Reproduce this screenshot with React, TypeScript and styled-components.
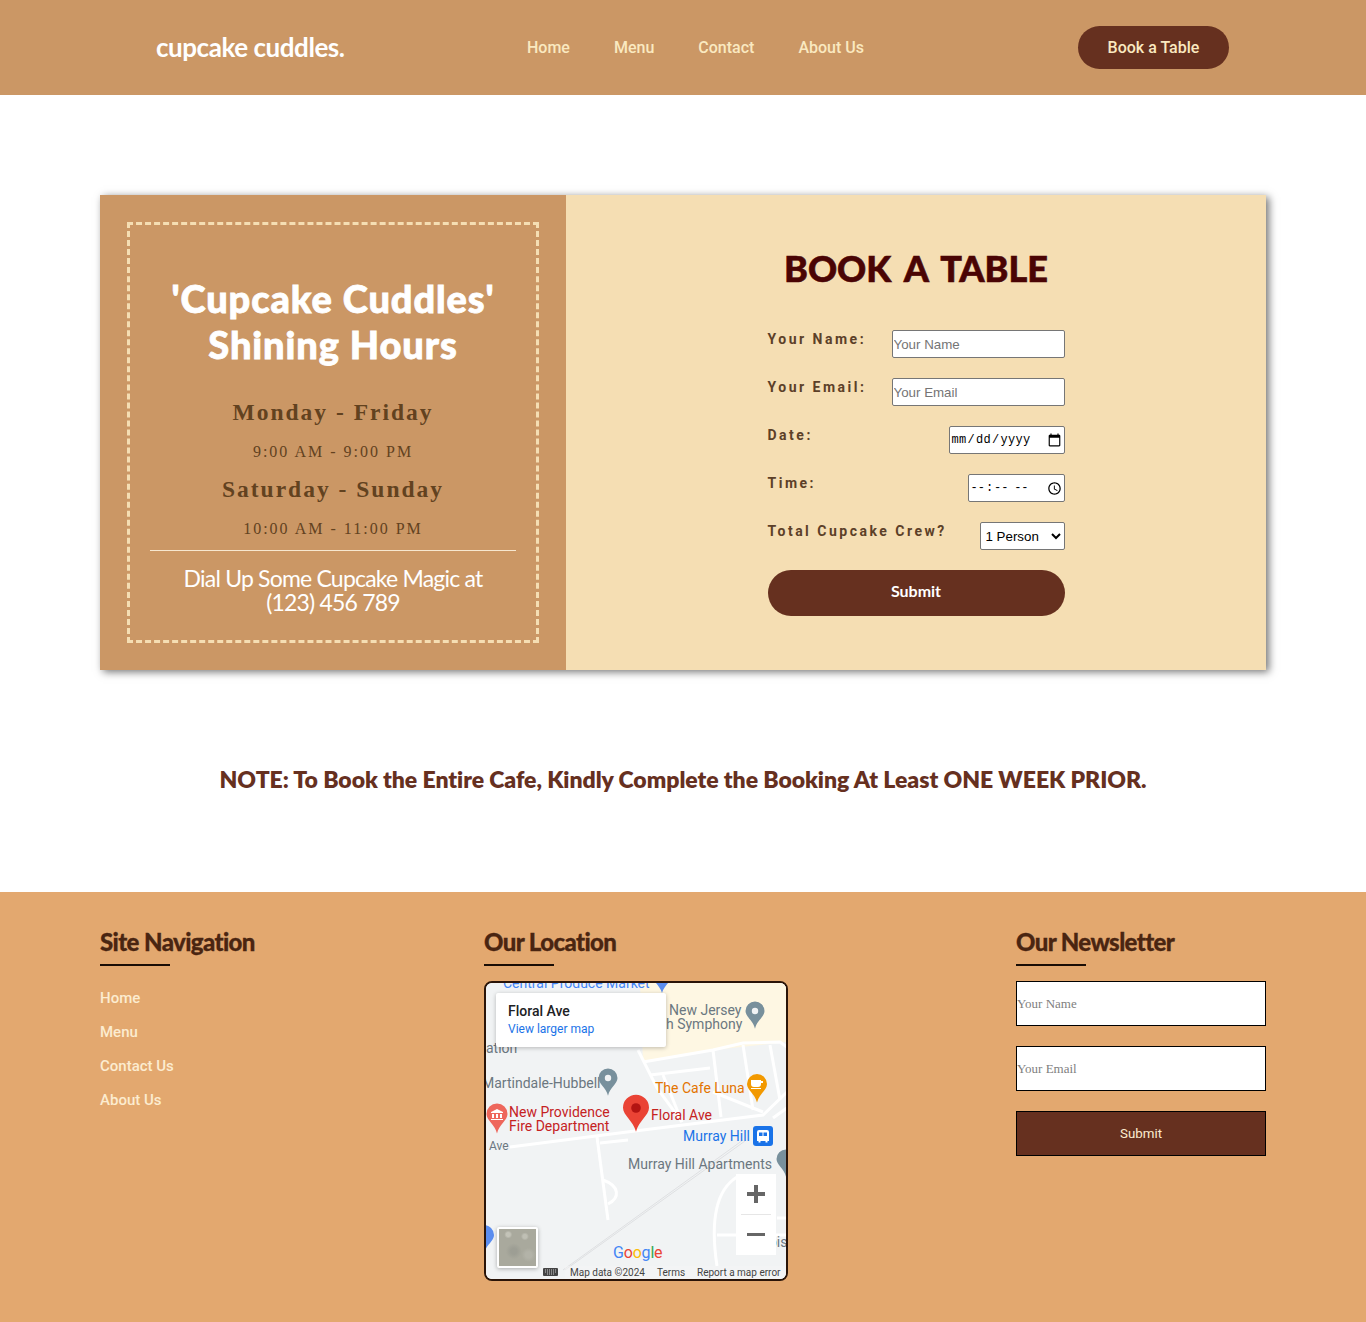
import React from 'react'
import styled, { createGlobalStyle } from 'styled-components'

const GlobalStyle = createGlobalStyle`
    * { box-sizing: border-box; }
    html, body { margin: 0; padding: 0; background: #fff; }
    body { font-family: 'Roboto', 'Liberation Sans', sans-serif; }
`

const SPARTAN = `'Lato', 'Open Sans', sans-serif`
const SERIF = `'Liberation Serif', serif`

const Header = styled.header`
    display: flex;
    align-items: center;
    height: 95px;
    padding: 0 137px 0 156px;
    background: #cb9765;
`

const Logo = styled.div`
    width: 188px;
    margin-top: -2px;
    font-family: ${SPARTAN};
    font-size: 26px;
    font-weight: 700;
    letter-spacing: -0.45px;
    color: #fff;
    white-space: nowrap;
`

const Nav = styled.nav`
    display: flex;
    gap: 44px;
    margin-left: 183px;
    margin-top: -1px;
`

const NavLink = styled.a`
    font-size: 16px;
    font-weight: 500;
    color: #fae9c0;
`

const HeaderButton = styled.button`
    width: 151px;
    height: 43px;
    margin-left: auto;
    margin-top: -1px;
    border: 0;
    border-radius: 22px;
    background: #66301f;
    color: #fae9c0;
    font-family: inherit;
    font-size: 16px;
    font-weight: 500;
`

const Main = styled.main`
    padding: 100px 100px 0;
`

const Card = styled.section`
    display: flex;
    height: 475px;
    box-shadow: 3px 2px 8px rgba(0, 0, 0, 0.55);
`

const HoursPanel = styled.div`
    width: 466px;
    padding: 27px;
    background: #cb9765;
`

const HoursFrame = styled.div`
    height: 421px;
    padding: 50px 20px 0;
    border: 3px dashed #f5deb3;
    text-align: center;
`

const HoursTitle = styled.h2`
    margin: 0;
    font-family: ${SPARTAN};
    font-size: 38px;
    font-weight: 900;
    line-height: 46px;
    letter-spacing: 0.9px;
    color: #fff;
    -webkit-text-stroke: 0.8px #fff;
`

const DayName = styled.h3`
    margin: 0;
    font-family: ${SERIF};
    font-size: 23.5px;
    font-weight: 700;
    line-height: 30px;
    letter-spacing: 2px;
    color: #62421f;

    &:first-of-type { margin-top: 30px; }
`

const DayHours = styled.p`
    margin: 15px 0 12px;
    font-family: ${SERIF};
    font-size: 16px;
    line-height: 20px;
    letter-spacing: 2px;
    color: #62421f;
`

const Rule = styled.hr`
    margin: -1px 0 0;
    border: 0;
    border-top: 1px solid #f7e7cf;
`

const Dial = styled.p`
    margin: 15px 0 0;
    font-family: ${SPARTAN};
    font-size: 23px;
    line-height: 24px;
    letter-spacing: -0.8px;
    color: #fff;
`

const BookingPanel = styled.div`
    display: flex;
    flex: 1;
    flex-direction: column;
    align-items: center;
    background: #f5deb3;
`

const BookingTitle = styled.h1`
    margin: 49px 0 38px;
    font-family: ${SPARTAN};
    font-size: 36px;
    font-weight: 900;
    line-height: 48px;
    word-spacing: 5px;
    color: #4a0404;
    -webkit-text-stroke: 0.6px #4a0404;
`

const BookingForm = styled.form`
    display: flex;
    flex-direction: column;
    gap: 20px;
    width: 297px;
`

const FormRow = styled.div`
    display: flex;
    justify-content: space-between;
    align-items: flex-start;
    height: 28px;
`

const FormLabel = styled.label`
    font-size: 14px;
    font-weight: 700;
    line-height: 18px;
    letter-spacing: 2.5px;
    color: #5c4028;
`

const FormField = styled.input<{ $width: number }>`
    width: ${p => p.$width}px;
    height: 28px;
    padding: 1px;
    border: 1px solid #767676;
    border-radius: 2px;
    background: #fff;
    font-family: 'Liberation Sans', sans-serif;
    font-size: 13.33px;

    &::placeholder { color: #757575; }
`

const TemporalField = styled(FormField)<{ $spacing: number }>`
    font-family: 'Liberation Mono', monospace;
    font-size: 12px;
    letter-spacing: ${p => p.$spacing}px;

    &::-webkit-calendar-picker-indicator {
        width: 15px;
        height: 15px;
        margin: 0 1px 0 0;
        padding: 0;
    }
`

const CrewSelect = styled.select`
    width: 85px;
    height: 28px;
    padding-left: 1px;
    border: 1px solid #767676;
    border-radius: 2px;
    background: #fff;
    font-family: 'Liberation Sans', sans-serif;
    font-size: 13.33px;
`

const BookingSubmit = styled.button`
    height: 46px;
    padding-bottom: 6px;
    border: 0;
    border-radius: 23px;
    background: #66301f;
    color: #fff;
    font-family: ${SPARTAN};
    font-size: 16px;
    font-weight: 700;
`

const Note = styled.p`
    margin: 0;
    padding: 95px 0 99px;
    font-family: ${SPARTAN};
    font-size: 23px;
    font-weight: 800;
    line-height: 28px;
    letter-spacing: -0.05px;
    text-align: center;
    color: #66301f;
`

const Footer = styled.footer`
    display: flex;
    height: 430px;
    padding: 36px 100px 0;
    background: #e3a86f;
`

const FooterColumn = styled.div<{ $width: number }>`
    width: ${p => p.$width}px;
    flex: none;
`

const FooterTitle = styled.h4`
    margin: 0 0 15px;
    font-family: ${SPARTAN};
    font-size: 24px;
    font-weight: 900;
    line-height: 28px;
    letter-spacing: -0.6px;
    color: #4a2511;
    -webkit-text-stroke: 0.3px #4a2511;

    &::after {
        content: '';
        display: block;
        width: 70px;
        height: 2px;
        margin-top: 8px;
        background: #1a0d05;
    }
`

const FooterLinks = styled.ul`
    display: flex;
    flex-direction: column;
    gap: 14px;
    margin: 22px 0 0;
    padding: 0;
    list-style: none;
`

const FooterLink = styled.li`
    font-size: 15px;
    font-weight: 500;
    line-height: 20px;
    color: #fcecd0;
`

const MapFrame = styled.div`
    position: relative;
    width: 304px;
    height: 300px;
    overflow: hidden;
    border: 2px solid #2a1408;
    border-radius: 8px;
    background: #f1f3f4;
`

const MapDrawing = styled.svg`
    display: block;
    width: 300px;
    height: 296px;
    font-family: 'Roboto', sans-serif;
`

const MapCard = styled.div`
    position: absolute;
    top: 10px;
    left: 10px;
    width: 170px;
    height: 54px;
    padding: 9px 12px;
    border-radius: 2px;
    background: #fff;
    box-shadow: 0 1px 4px rgba(0, 0, 0, 0.25);
`

const MapCardTitle = styled.div`
    font-size: 14px;
    font-weight: 500;
    line-height: 18px;
    color: #202124;
`

const MapCardLink = styled.div`
    margin-top: 1px;
    font-size: 12px;
    line-height: 16px;
    color: #1a73e8;
`

const ZoomControl = styled.div`
    position: absolute;
    top: 191px;
    left: 250px;
    display: flex;
    flex-direction: column;
    align-items: center;
    width: 40px;
    height: 81px;
    background: #fff;
`

const ZoomButton = styled.div`
    display: flex;
    flex: 1;
    align-items: center;
    justify-content: center;
    width: 100%;
    color: #666;
`

const ZoomDivider = styled.div`
    width: 30px;
    height: 1px;
    background: #e6e6e6;
`

const Thumb = styled.div`
    position: absolute;
    top: 244px;
    left: 11px;
    width: 41px;
    height: 41px;
    border: 2px solid #fff;
    border-radius: 2px;
    background:
        radial-gradient(circle at 25% 15%, #c3c3b8 0 2px, transparent 4px),
        radial-gradient(circle at 70% 20%, #bfbfb4 0 2px, transparent 4px),
        radial-gradient(circle at 40% 60%, #9d9e94 0 3px, transparent 8px),
        radial-gradient(circle at 80% 70%, #b3b3a8 0 3px, transparent 7px),
        #a9a99d;
    box-shadow: 0 1px 4px rgba(0, 0, 0, 0.3);
`

const NewsletterForm = styled.form`
    display: flex;
    flex-direction: column;
    gap: 20px;
`

const NewsletterInput = styled.input`
    width: 250px;
    height: 45px;
    padding: 0;
    border: 1.5px solid #000;
    background: #fff;
    font-family: ${SERIF};
    font-size: 13px;

    &::placeholder { color: #808080; }
`

const NewsletterSubmit = styled.button`
    width: 250px;
    height: 45px;
    border: 1.5px solid #000;
    background: #66301f;
    color: #fcecd0;
    font-family: inherit;
    font-size: 13.33px;
`

const Pin = ({ x, y, fill, r = 9 }: { x: number; y: number; fill: string; r?: number }) => (
    <g transform={`translate(${x} ${y})`}>
        <path d={`M0 ${r * 1.75}C${-r * 0.2} ${r * 0.9} ${-r} ${r * 0.5} ${-r} ${-r * 0.1}A${r} ${r} 0 1 1 ${r} ${-r * 0.1}C${r} ${r * 0.5} ${r * 0.2} ${r * 0.9} 0 ${r * 1.75}Z`} fill={fill} />
    </g>
)

const MapPicture = () => (
    <MapDrawing viewBox="486 983 300 296">
        <rect x="486" y="983" width="300" height="296" fill="#f1f3f4" />
        <path d="M640 983H786V1042L713 1050L643 1062Z" fill="#fef7e3" />
        <g fill="none" stroke="#fff" strokeWidth="3">
            <path d="M638 1050L657 1088L682 1122" />
            <path d="M643 1062L713 1050L743 1043L780 1042L787 1047" />
            <path d="M650 1075L710 1068" />
            <path d="M663 1075L682 1122" />
            <path d="M713 1050L721 1117" />
            <path d="M743 1045L753 1110" />
            <path d="M770 1045L780 1100" />
            <path d="M713 1092L763 1112" />
            <path d="M510 1147L627 1132L763 1115L787 1092" />
            <path d="M773 1118L787 1108" />
            <path d="M597 1137L608 1220" />
            <path d="M600 1143L628 1140" />
            <path d="M603 1180C620 1186 620 1198 608 1204" />
            <path d="M737 1177C716 1190 710 1220 717 1266" />
            <path d="M717 1235H786" />
            <path d="M777 1218H786" />
        </g>
        <path d="M563 1270L743 1140M565 1270L745 1141" fill="none" stroke="#d9dbdd" strokeWidth="0.8" />
        <text x="503" y="988" fontSize="14" fill="#4285f4">Central Produce Market</text>
        <Pin x={662} y={979} fill="#5b8def" r={8} />
        <g fontSize="14" fill="#6b7780">
            <text x="669" y="1015">New Jersey</text>
            <text x="666" y="1029">h Symphony</text>
            <text x="486" y="1053">ation</text>
            <text x="482" y="1088">Martindale-Hubbell</text>
            <text x="628" y="1169">Murray Hill Apartments</text>
            <text x="769" y="1247">bis</text>
        </g>
        <text x="489" y="1150" fontSize="12" fill="#6b7780">Ave</text>
        <Pin x={755} y={1012} fill="#78909c" r={9.5} />
        <circle cx="755" cy="1011" r="3.2" fill="#f1f3f4" />
        <Pin x={608} y={1079} fill="#78909c" r={9.5} />
        <circle cx="608" cy="1078" r="3.2" fill="#f1f3f4" />
        <Pin x={786} y={1160} fill="#78909c" r={9.5} />
        <text x="655" y="1093" fontSize="14" fill="#e37400">The Cafe Luna</text>
        <Pin x={757} y={1085} fill="#f29900" r={10} />
        <path d="M751 1080h10v4a3 3 0 0 1-3 3h-4a3 3 0 0 1-3-3zM751 1088h10v1h-10zM761 1081h2v2h-2z" fill="#fff" />
        <Pin x={497} y={1115} fill="#ee675c" r={10.5} />
        <path d="M491 1112l6-3 6 3v1h-12zM492 1114h2v4h-2zM496 1114h2v4h-2zM500 1114h2v4h-2zM491 1119h12v1h-12z" fill="#fff" />
        <g fontSize="14" fill="#c5221f">
            <text x="509" y="1117">New Providence</text>
            <text x="509" y="1131">Fire Department</text>
            <text x="651" y="1120">Floral Ave</text>
        </g>
        <Pin x={636} y={1109} fill="#ea4335" r={13} />
        <circle cx="636" cy="1108" r="4.8" fill="#b31412" />
        <text x="683" y="1141" fontSize="14" fill="#1a73e8">Murray Hill</text>
        <rect x="753" y="1126" width="20" height="20" rx="3" fill="#1a73e8" />
        <path d="M759 1130h8a2 2 0 0 1 2 2v9h-1.500v1.500h-2V1141h-5v1.500h-2V1141H757v-9a2 2 0 0 1 2-2zM759 1132.500v3.500h3.500v-3.500zM763.500 1132.500v3.500h3.500v-3.500z" fill="#fff" fillRule="evenodd" />
        <Pin x={484} y={1236} fill="#5b8def" r={10} />
        <text x="613" y="1258" fontSize="16" letterSpacing="-0.2">
            <tspan fill="#4285f4">G</tspan><tspan fill="#ea4335">o</tspan><tspan fill="#fbbc05">o</tspan><tspan fill="#4285f4">g</tspan><tspan fill="#34a853">l</tspan><tspan fill="#ea4335">e</tspan>
        </text>
        <rect x="565" y="1266" width="221" height="13" fill="#f5f5f5" opacity="0.5" />
        <rect x="543" y="1268" width="15" height="8" rx="1" fill="#444" />
        <path d="M545 1270h11M545 1272h11M547 1274h7" stroke="#f1f3f4" strokeWidth="0.8" strokeDasharray="1 1" />
        <g fontSize="10" fill="#444">
            <text x="570" y="1276">Map data ©2024</text>
            <text x="657" y="1276">Terms</text>
            <text x="697" y="1276">Report a map error</text>
        </g>
    </MapDrawing>
)

const App = () => {
    return (
        <>
            <GlobalStyle />
            <Header>
                <Logo>cupcake cuddles.</Logo>
                <Nav>
                    <NavLink>Home</NavLink>
                    <NavLink>Menu</NavLink>
                    <NavLink>Contact</NavLink>
                    <NavLink>About Us</NavLink>
                </Nav>
                <HeaderButton>Book a Table</HeaderButton>
            </Header>
            <Main>
                <Card>
                    <HoursPanel>
                        <HoursFrame>
                            <HoursTitle>'Cupcake Cuddles'<br />Shining Hours</HoursTitle>
                            <DayName>Monday - Friday</DayName>
                            <DayHours>9:00 AM - 9:00 PM</DayHours>
                            <DayName>Saturday - Sunday</DayName>
                            <DayHours>10:00 AM - 11:00 PM</DayHours>
                            <Rule />
                            <Dial>Dial Up Some Cupcake Magic at<br />(123) 456 789</Dial>
                        </HoursFrame>
                    </HoursPanel>
                    <BookingPanel>
                        <BookingTitle>BOOK A TABLE</BookingTitle>
                        <BookingForm>
                            <FormRow>
                                <FormLabel>Your Name:</FormLabel>
                                <FormField $width={173} placeholder="Your Name" />
                            </FormRow>
                            <FormRow>
                                <FormLabel>Your Email:</FormLabel>
                                <FormField $width={173} placeholder="Your Email" />
                            </FormRow>
                            <FormRow>
                                <FormLabel>Date:</FormLabel>
                                <TemporalField $width={116} $spacing={0.3} type="date" />
                            </FormRow>
                            <FormRow>
                                <FormLabel>Time:</FormLabel>
                                <TemporalField $width={97} $spacing={1.1} type="time" />
                            </FormRow>
                            <FormRow>
                                <FormLabel>Total Cupcake Crew?</FormLabel>
                                <CrewSelect defaultValue="1">
                                    <option value="1">1 Person</option>
                                </CrewSelect>
                            </FormRow>
                            <BookingSubmit type="button">Submit</BookingSubmit>
                        </BookingForm>
                    </BookingPanel>
                </Card>
                <Note>NOTE: To Book the Entire Cafe, Kindly Complete the Booking At Least ONE WEEK PRIOR.</Note>
            </Main>
            <Footer>
                <FooterColumn $width={384}>
                    <FooterTitle>Site Navigation</FooterTitle>
                    <FooterLinks>
                        <FooterLink>Home</FooterLink>
                        <FooterLink>Menu</FooterLink>
                        <FooterLink>Contact Us</FooterLink>
                        <FooterLink>About Us</FooterLink>
                    </FooterLinks>
                </FooterColumn>
                <FooterColumn $width={532}>
                    <FooterTitle>Our Location</FooterTitle>
                    <MapFrame>
                        <MapPicture />
                        <MapCard>
                            <MapCardTitle>Floral Ave</MapCardTitle>
                            <MapCardLink>View larger map</MapCardLink>
                        </MapCard>
                        <ZoomControl>
                            <ZoomButton>
                                <svg width="18" height="18" viewBox="0 0 18 18"><path d="M0 7h7V0h4v7h7v4h-7v7H7v-7H0z" fill="currentColor" /></svg>
                            </ZoomButton>
                            <ZoomDivider />
                            <ZoomButton>
                                <svg width="18" height="18" viewBox="0 0 18 18"><path d="M0 7h18v3H0z" fill="currentColor" /></svg>
                            </ZoomButton>
                        </ZoomControl>
                        <Thumb />
                    </MapFrame>
                </FooterColumn>
                <FooterColumn $width={250}>
                    <FooterTitle>Our Newsletter</FooterTitle>
                    <NewsletterForm>
                        <NewsletterInput placeholder="Your Name" />
                        <NewsletterInput placeholder="Your Email" />
                        <NewsletterSubmit type="button">Submit</NewsletterSubmit>
                    </NewsletterForm>
                </FooterColumn>
            </Footer>
        </>
    )
}

export default App
